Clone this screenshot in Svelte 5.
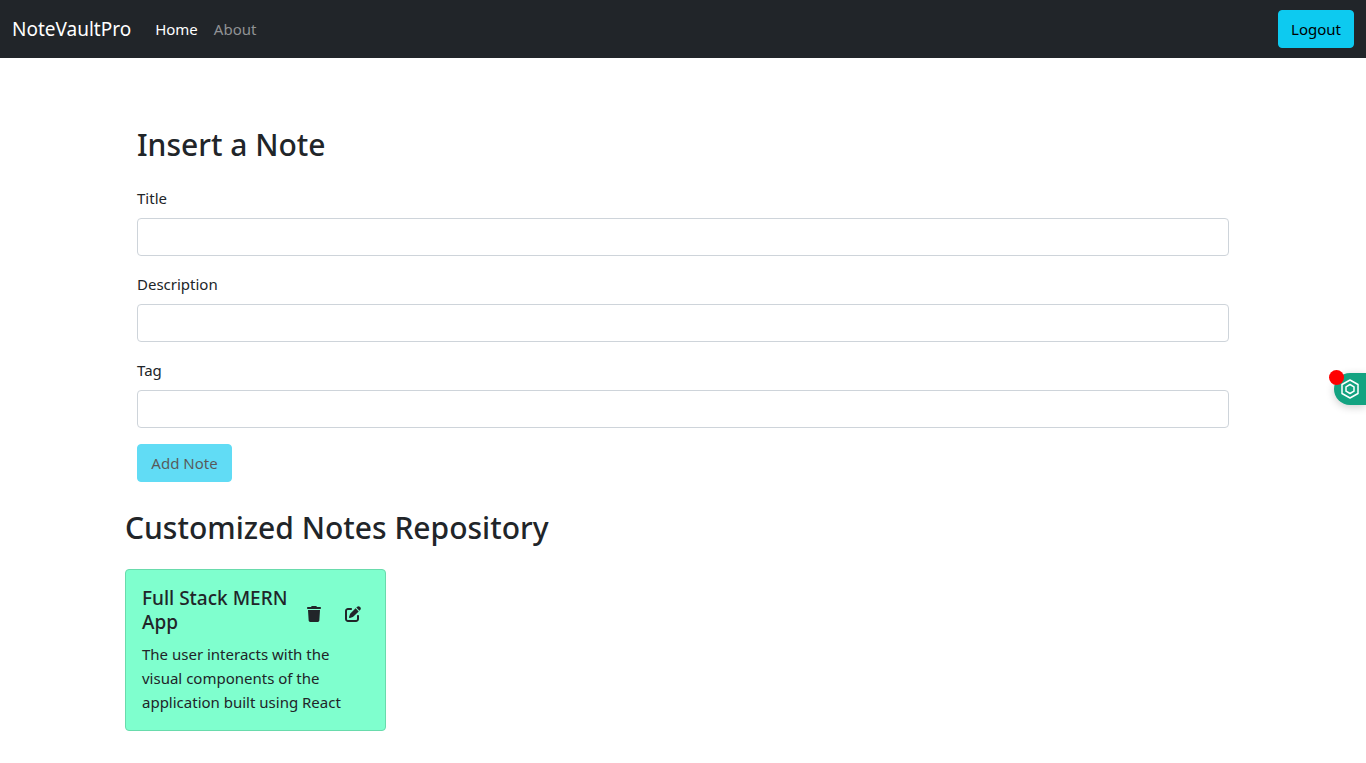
<script>
  let note = $state({ title: '', description: '', tag: '' });
  const fields = [
    { key: 'title', label: 'Title' },
    { key: 'description', label: 'Description' },
    { key: 'tag', label: 'Tag' },
  ];
  let notes = $state([
    {
      id: 1,
      title: 'Full Stack MERN App',
      description: 'The user interacts with the visual components of the application built using React',
    },
  ]);
  const incomplete = $derived(note.title.length < 5 || note.description.length < 5);

  function addNote(event) {
    event.preventDefault();
    notes.push({ id: Date.now(), title: note.title, description: note.description });
    note = { title: '', description: '', tag: '' };
  }

  function removeNote(id) {
    notes = notes.filter((n) => n.id !== id);
  }
</script>

<nav class="navbar">
  <a class="brand" href="#home">NoteVaultPro</a>
  <a class="nav-link active" href="#home">Home</a>
  <a class="nav-link" href="#about">About</a>
  <button class="btn logout" type="button">Logout</button>
</nav>

<main class="container">
  <form class="note-form" onsubmit={addNote}>
    <h2>Insert a Note</h2>
    {#each fields as field}
      <div class="field">
        <label for={field.key}>{field.label}</label>
        <input id={field.key} type="text" bind:value={note[field.key]} />
      </div>
    {/each}
    <button class="btn submit" type="submit" disabled={incomplete}>Add Note</button>
  </form>

  <h2>Customized Notes Repository</h2>
  <div class="notes">
    {#each notes as item (item.id)}
      <article class="card">
        <header>
          <h5>{item.title}</h5>
          <button class="icon" type="button" aria-label="Delete note" onclick={() => removeNote(item.id)}>
            <svg width="14" height="16" viewBox="0 0 448 512"><path d="M135.2 17.7L128 32H32C14.3 32 0 46.3 0 64S14.3 96 32 96H416c17.7 0 32-14.3 32-32s-14.3-32-32-32H320l-7.2-14.3C307.4 6.8 296.3 0 284.2 0H163.8c-12.1 0-23.2 6.8-28.6 17.7zM416 128H32L53.2 467c1.6 25.3 22.6 45 47.9 45H346.9c25.3 0 46.3-19.7 47.9-45L416 128z" /></svg>
          </button>
          <button class="icon" type="button" aria-label="Edit note">
            <svg width="16" height="16" viewBox="0 0 512 512"><path d="M471.6 21.7c-21.9-21.9-57.3-21.9-79.2 0L362.3 51.7l97.9 97.9 30.1-30.1c21.9-21.9 21.9-57.3 0-79.2L471.6 21.7zm-299.2 220c-6.1 6.1-10.8 13.6-13.5 21.9l-29.6 88.8c-2.9 8.6-.6 18.1 5.8 24.6s15.9 8.7 24.6 5.8l88.8-29.6c8.2-2.7 15.7-7.4 21.9-13.5L437.7 172.3 339.7 74.3 172.4 241.7zM96 64C43 64 0 107 0 160V416c0 53 43 96 96 96H352c53 0 96-43 96-96V320c0-17.7-14.3-32-32-32s-32 14.3-32 32v96c0 17.7-14.3 32-32 32H96c-17.7 0-32-14.3-32-32V160c0-17.7 14.3-32 32-32h96c17.7 0 32-14.3 32-32s-14.3-32-32-32H96z" /></svg>
          </button>
        </header>
        <p>{item.description}</p>
      </article>
    {/each}
  </div>
</main>

<button class="assistant" type="button" aria-label="Open assistant">
  <svg width="20" height="20" viewBox="0 0 20 20" fill="none" stroke="#fff" stroke-linejoin="round">
    <path stroke-width="1.5" d="M10 1 18 5.500V14.500L10 19 2 14.500V5.500Z" />
    <path stroke-width="1.5" d="M10 5.500 14 7.800V12.200L10 14.500 6 12.200V7.800Z" />
  </svg>
  <span class="dot"></span>
</button>

<style>
  :global(body) {
    margin: 0;
    background: #fff;
    color: #212529;
    font-family: "Segoe UI", "Noto Sans", "Open Sans", sans-serif;
    font-size: 15px;
    line-height: 24px;
  }
  :global(*) {
    box-sizing: border-box;
  }
  .navbar {
    display: flex;
    align-items: center;
    padding: 10px 12px;
    background: #212529;
  }
  .navbar a {
    text-decoration: none;
  }
  .brand {
    margin-right: 16px;
    color: #fff;
    font-size: 19px;
  }
  .nav-link {
    padding: 0 8px;
    color: #909294;
  }
  .nav-link.active {
    color: #fff;
  }
  .btn {
    padding: 6px 12px;
    border: 1px solid #0dcaf0;
    border-radius: 4px;
    background: #0dcaf0;
    color: #000;
    font: inherit;
    cursor: pointer;
  }
  .btn:disabled {
    opacity: 0.65;
    cursor: default;
  }
  .logout {
    margin-left: auto;
  }
  .submit {
    min-width: 95px;
  }
  .container {
    max-width: 1140px;
    margin: 0 auto;
    padding: 68px 12px 32px;
  }
  .note-form {
    padding: 0 12px;
    margin-bottom: 27px;
  }
  h2 {
    margin: 0 0 23px;
    font-size: 30px;
    font-weight: 500;
    line-height: 37px;
  }
  .field {
    margin-bottom: 16px;
  }
  label {
    display: block;
    margin-bottom: 8px;
  }
  input {
    display: block;
    width: 100%;
    height: 38px;
    padding: 6px 12px;
    border: 1px solid #ced4da;
    border-radius: 4px;
    background: #fff;
    color: inherit;
    font: inherit;
  }
  .notes {
    display: grid;
    grid-template-columns: repeat(auto-fill, minmax(240px, 1fr));
    gap: 24px;
  }
  .card {
    padding: 16px;
    border: 1px solid #69dbac;
    border-radius: 4px;
    background: #7fffce;
  }
  .card header {
    display: flex;
    align-items: center;
  }
  h5 {
    flex: 1;
    margin: 0 0 8px;
    font-size: 19px;
    font-weight: 500;
    line-height: 24px;
  }
  .icon {
    display: flex;
    padding: 0 8px;
    border: 0;
    background: none;
    color: inherit;
    cursor: pointer;
  }
  .icon + .icon {
    margin-left: 8px;
  }
  .icon path {
    fill: currentColor;
  }
  .card p {
    margin: 0;
  }
  .assistant {
    position: fixed;
    top: 373px;
    right: 0;
    width: 32px;
    height: 32px;
    padding: 6px;
    border: 0;
    border-radius: 16px 0 0 16px;
    background: #13a381;
    box-shadow: 0 2px 8px rgba(0, 0, 0, 0.2);
    cursor: pointer;
  }
  .assistant svg {
    display: block;
  }
  .dot {
    position: absolute;
    top: -3px;
    left: -5px;
    width: 15px;
    height: 15px;
    border-radius: 50%;
    background: #f00;
  }
</style>
